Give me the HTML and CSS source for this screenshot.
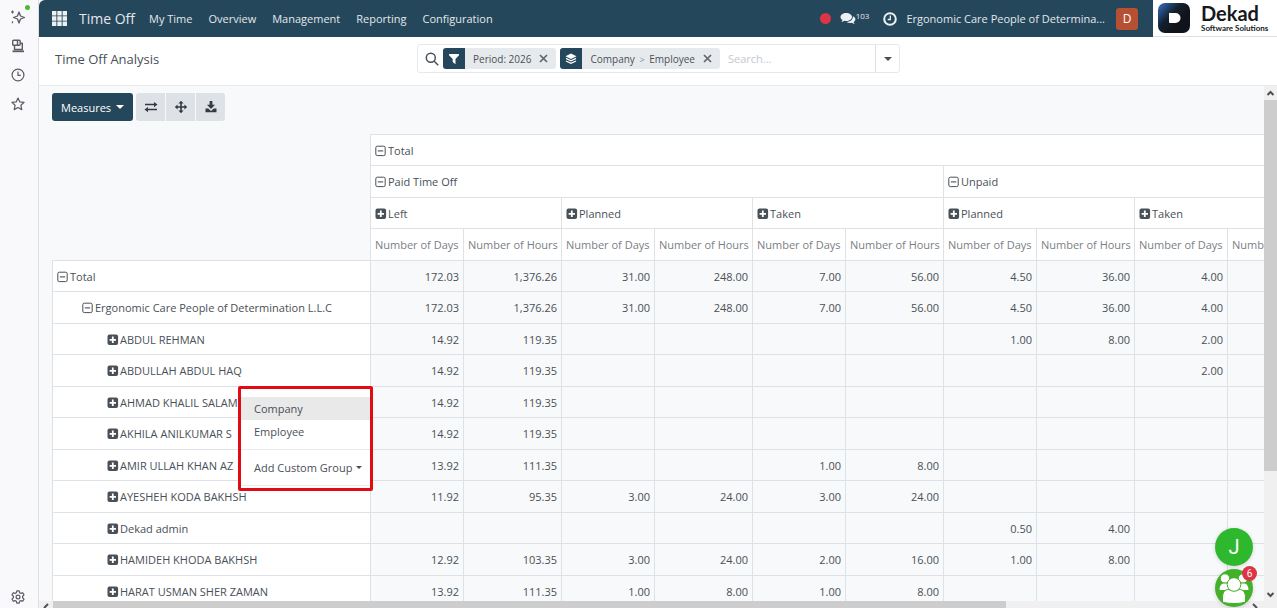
FILE: index.html
```html
<!DOCTYPE html>
<html lang="en">
  <head>
    <meta charset="UTF-8" />
    <meta name="viewport" content="width=device-width, initial-scale=1.0" />
    <title>Time Off Analysis</title>
    <link rel="stylesheet" href="styles.css">
  </head>

  <body>
    <svg class="defs" width="0" height="0">
      <symbol id="plus" viewBox="0 0 12 12">
        <rect x="0.5" y="0.5" width="10.600" height="10.600" rx="2" fill="currentColor" />
        <path d="M5.800 2.600v6.400M2.600 5.800h6.400" stroke="#fff" stroke-width="1.800" />
      </symbol>
      <symbol id="minus" viewBox="0 0 12 12">
        <rect x="0.800" y="1.200" width="9.400" height="9.400" rx="1.500" fill="none" stroke="currentColor" />
        <path d="M2.800 5.900h5.400" stroke="currentColor" stroke-width="1.100" />
      </symbol>
    </svg>

    <aside class="sidebar">
      <button class="side-btn" aria-label="Assistant">
        <svg width="16" height="16" viewBox="0 0 16 16" fill="none" stroke="#5b5b66" stroke-width="1.3" stroke-linejoin="round">
          <path d="M9 3l1.500 4L14.500 8.500l-4 1.500L9 14l-1.500-4L3.500 8.500l4-1.500z" />
          <path d="M2.500 1.500v3M1 3h3M2.500 12.300v2" stroke-width="1.200" />
        </svg>
        <span class="green-dot"></span>
      </button>
      <button class="side-btn" aria-label="Synced tabs">
        <svg width="16" height="16" viewBox="0 0 16 16" fill="none" stroke="#5b5b66" stroke-width="1.4" stroke-linejoin="round">
          <rect x="2.700" y="2.200" width="7.500" height="5" rx="1" />
          <path d="M7.500 2.200v5M4.500 7.500v4h7.800V5.300h-1.600" />
          <path d="M2.500 13.300h11.500" stroke-width="1.800" />
        </svg>
      </button>
      <button class="side-btn" aria-label="History">
        <svg width="16" height="16" viewBox="0 0 16 16" fill="none" stroke="#5b5b66" stroke-width="1.2">
          <circle cx="8" cy="8" r="5.900" />
          <path d="M8 4.500V8.300h2.800" />
        </svg>
      </button>
      <button class="side-btn" aria-label="Bookmarks">
        <svg width="16" height="16" viewBox="0 0 16 16" fill="none" stroke="#5b5b66" stroke-width="1.2" stroke-linejoin="round">
          <path d="M8 2l1.800 3.900 4.300.5-3.200 2.900.9 4.300L8 11.500l-3.800 2.100.9-4.300L1.900 6.400l4.300-.5z" />
        </svg>
      </button>
      <button class="side-btn settings" aria-label="Settings">
        <svg width="16" height="16" viewBox="0 0 16 16" fill="none" stroke="#5b5b66" stroke-width="1.2" stroke-linejoin="round">
          <path d="M6.800 1.800h2.400l.4 1.900 1.300.7 1.800-.7 1.300 2.200-1.400 1.300v1.600l1.400 1.300-1.300 2.200-1.800-.7-1.300.7-.4 1.900H6.800l-.4-1.900-1.300-.7-1.800.7L2 10.100l1.400-1.300V7.200L2 5.900l1.300-2.200 1.800.7 1.300-.7z" />
          <circle cx="8" cy="8" r="1.900" />
        </svg>
      </button>
    </aside>

    <main>
      <header class="navbar">
        <button class="apps" aria-label="Apps">
          <svg width="15" height="15" viewBox="0 0 15 15" fill="#eef1f3">
            <path d="M0 0h4.400v4.400H0zM5.300 0h4.400v4.400H5.300zM10.600 0H15v4.400h-4.400zM0 5.300h4.400v4.400H0zM5.300 5.300h4.400v4.400H5.300zM10.600 5.300H15v4.400h-4.400zM0 10.600h4.400V15H0zM5.300 10.600h4.400V15H5.300zM10.600 10.600H15V15h-4.400z" />
          </svg>
        </button>
        <a href="#" class="brand">Time Off</a>
        <nav>
          <a href="#">My Time</a>
          <a href="#">Overview</a>
          <a href="#">Management</a>
          <a href="#">Reporting</a>
          <a href="#">Configuration</a>
        </nav>
        <div class="tray">
          <span class="red-dot"></span>
          <button class="messages" aria-label="Messages">
            <svg width="16" height="14" viewBox="0 0 16 14" fill="#eef1f3">
              <path d="M6.200 1C2.900 1 .5 2.700.5 5c0 1.300.8 2.400 2 3.100-.2.700-.6 1.200-1.100 1.800 1.300-.1 2.300-.6 3-1.100.6.1 1.200.2 1.800.2 3.300 0 5.800-1.700 5.800-4S9.500 1 6.200 1z" />
              <path d="M12.900 4.300c1.500.7 2.500 1.700 2.500 3 0 1.200-.7 2.100-1.800 2.800.2.700.6 1.300 1.200 1.900-1.300-.1-2.300-.6-3-1.200-1.900.4-4 .1-5.300-.8 3.500-.1 6.700-2.200 6.400-5.700z" />
            </svg>
            <sup>103</sup>
          </button>
          <button class="activity" aria-label="Activities">
            <svg width="14" height="14" viewBox="0 0 14 14" fill="none" stroke="#eef1f3">
              <circle cx="7" cy="7" r="5.800" stroke-width="2" />
              <path d="M7.300 3.500v4H4.700" stroke-width="1.300" />
            </svg>
          </button>
          <span class="company">Ergonomic Care People of Determina...</span>
          <button class="avatar">D</button>
        </div>
        <div class="logo">
          <svg width="32" height="30" viewBox="0 0 32 30">
            <defs>
              <linearGradient id="lg" x1="0" y1="0" x2="0.700" y2="0.600">
                <stop offset="0" stop-color="#3475c9" />
                <stop offset="0.600" stop-color="#14202f" />
                <stop offset="1" stop-color="#10141a" />
              </linearGradient>
            </defs>
            <rect width="32" height="30" rx="7" fill="url(#lg)" />
            <path d="M11 10h6.500a5 5 0 0 1 0 10H12a1 1 0 0 1-1-1z" fill="#fff" />
          </svg>
          <div class="logo-text">
            <strong>Dekad</strong>
            <span>Software Solutions</span>
          </div>
        </div>
      </header>

      <section class="control">
        <h1>Time Off Analysis</h1>
        <div class="search">
          <svg width="14" height="14" viewBox="0 0 14 14" fill="none" stroke="#495057" stroke-width="1.500">
            <circle cx="5.800" cy="5.800" r="4.500" />
            <path d="M9.200 9.200l4 4" />
          </svg>
          <div class="facet">
            <span class="facet-icon">
              <svg width="12" height="12" viewBox="0 0 12 12" fill="#fff">
                <path d="M1 1h10v1.300L7.500 6v5.200L4.700 9V6L1 2.300z" />
              </svg>
            </span>
            <span>Period: 2026</span>
            <button aria-label="Remove period">
              <svg width="9" height="9" viewBox="0 0 9 9" stroke="#5f666d" stroke-width="1.700"><path d="M1 1l7 7M8 1L1 8" /></svg>
            </button>
          </div>
          <div class="facet">
            <span class="facet-icon">
              <svg width="12" height="12" viewBox="0 0 12 12" fill="#fff">
                <path d="M6 0.500l5.500 2.700L6 5.900.5 3.200z" />
                <path d="M1 5.400l5 2.400 5-2.400M1 8l5 2.400L11 8" fill="none" stroke="#fff" stroke-width="1.200" />
              </svg>
            </span>
            <span>Company <small>&gt;</small> Employee</span>
            <button aria-label="Remove grouping">
              <svg width="9" height="9" viewBox="0 0 9 9" stroke="#5f666d" stroke-width="1.700"><path d="M1 1l7 7M8 1L1 8" /></svg>
            </button>
          </div>
          <input type="text" placeholder="Search..." aria-label="Search" />
          <button class="toggle" aria-label="Search options"><span class="caret"></span></button>
        </div>
      </section>

      <section class="content">
        <div class="view">
          <div class="buttons">
            <button class="measures">Measures <span class="caret"></span></button>
            <div class="btn-group">
              <button aria-label="Flip axis">
                <svg width="14" height="12" viewBox="0 0 14 12" fill="#343a40">
                  <path d="M1 2.800h9V1l3.500 2.600L10 6.200V4.200H1zM13 7.800H4V6L.5 8.600 4 11.200V9.200h9z" />
                </svg>
              </button>
              <button aria-label="Expand all">
                <svg width="14" height="14" viewBox="0 0 14 14" fill="#343a40">
                  <path d="M7 .8l2.600 2.800H7.800v2.600h2.600V4.400L13.200 7l-2.800 2.600V7.800H7.800v2.600h1.800L7 13.200l-2.600-2.800h1.800V7.800H3.600v1.800L.8 7l2.800-2.600v1.800h2.600V3.600H4.400z" />
                </svg>
              </button>
              <button aria-label="Download">
                <svg width="14" height="14" viewBox="0 0 14 14" fill="#343a40">
                  <path d="M5.600 1h2.800v3.800h2.600L7 8.900 3 4.800h2.600z" />
                  <path d="M1.500 8.500h2.700L7 11l2.800-2.500h2.700v3.700h-11z" />
                </svg>
              </button>
            </div>
          </div>

          <table>
            <colgroup>
              <col class="name">
              <col class="days"><col class="hours">
              <col class="days"><col class="hours">
              <col class="days"><col class="hours">
              <col class="days"><col class="hours">
              <col class="days"><col class="hours">
            </colgroup>
            <thead>
              <tr>
                <td class="corner" rowspan="4"></td>
                <th colspan="10"><svg class="ico"><use href="#minus" /></svg>Total</th>
              </tr>
              <tr>
                <th colspan="6"><svg class="ico"><use href="#minus" /></svg>Paid Time Off</th>
                <th colspan="4"><svg class="ico"><use href="#minus" /></svg>Unpaid</th>
              </tr>
              <tr>
                <th colspan="2"><svg class="ico"><use href="#plus" /></svg>Left</th>
                <th colspan="2"><svg class="ico"><use href="#plus" /></svg>Planned</th>
                <th colspan="2"><svg class="ico"><use href="#plus" /></svg>Taken</th>
                <th colspan="2"><svg class="ico"><use href="#plus" /></svg>Planned</th>
                <th colspan="2"><svg class="ico"><use href="#plus" /></svg>Taken</th>
              </tr>
              <tr class="measure-row">
                <th>Number of Days</th>
                <th>Number of Hours</th>
                <th>Number of Days</th>
                <th>Number of Hours</th>
                <th>Number of Days</th>
                <th>Number of Hours</th>
                <th>Number of Days</th>
                <th>Number of Hours</th>
                <th>Number of Days</th>
                <th>Number of Hours</th>
              </tr>
            </thead>
            <tbody id="rows"></tbody>
          </table>
        </div>
        <div class="vbar">
          <svg width="9" height="14" viewBox="0 0 9 14" fill="none" stroke="#505050" stroke-width="2"><path d="M1.500 9l3-3 3 3" /></svg>
          <div class="vthumb"></div>
          <svg width="9" height="14" viewBox="0 0 9 14" fill="none" stroke="#505050" stroke-width="2"><path d="M1.500 6l3 3 3-3" /></svg>
        </div>
      </section>
      <div class="hbar">
        <svg width="14" height="7" viewBox="0 0 14 7" fill="none" stroke="#505050" stroke-width="2"><path d="M9 3L5 7" /></svg>
        <div class="hthumb"></div>
        <svg class="right" width="14" height="7" viewBox="0 0 14 7" fill="none" stroke="#505050" stroke-width="2"><path d="M3 3l4 4" /></svg>
      </div>
    </main>

    <div class="menu">
      <button class="active">Company</button>
      <button>Employee</button>
      <hr />
      <button>Add Custom Group <span class="caret"></span></button>
      <hr />
    </div>

    <div class="chats">
      <button class="chat">J</button>
      <button class="chat people" aria-label="Group chat">
        <svg width="38" height="38" viewBox="0 0 38 38" fill="#fff" stroke="#43b02a" stroke-width="1">
          <circle cx="10" cy="9.500" r="4.700" />
          <circle cx="28" cy="9.500" r="4.700" />
          <path d="M4 21.500c0-5 2-7.500 6-7.500s6 2 6 7.500zM34 21.500c0-5-2-7.500-6-7.500s-6 2-6 7.500z" />
          <path d="M7.500 33v-4c0-5.500 2-8.500 6-8.500 3 1.500 8 1.500 11 0 4 0 6 3 6 8.500v4c-6 2-17 2-23 0z" />
          <circle cx="19" cy="15.500" r="6.800" />
        </svg>
        <span class="badge">6</span>
      </button>
    </div>

    <script>
      const rows = [
        ["Total", 0, "172.03", "1,376.26", "31.00", "248.00", "7.00", "56.00", "4.50", "36.00", "4.00", ""],
        ["Ergonomic Care People of Determination L.L.C", 1, "172.03", "1,376.26", "31.00", "248.00", "7.00", "56.00", "4.50", "36.00", "4.00", ""],
        ["ABDUL REHMAN", 2, "14.92", "119.35", "", "", "", "", "1.00", "8.00", "2.00", ""],
        ["ABDULLAH ABDUL HAQ", 2, "14.92", "119.35", "", "", "", "", "", "", "2.00", ""],
        ["AHMAD KHALIL SALAM", 2, "14.92", "119.35", "", "", "", "", "", "", "", ""],
        ["AKHILA ANILKUMAR S", 2, "14.92", "119.35", "", "", "", "", "", "", "", ""],
        ["AMIR ULLAH KHAN AZ", 2, "13.92", "111.35", "", "", "1.00", "8.00", "", "", "", ""],
        ["AYESHEH KODA BAKHSH", 2, "11.92", "95.35", "3.00", "24.00", "3.00", "24.00", "", "", "", ""],
        ["Dekad admin", 2, "", "", "", "", "", "", "0.50", "4.00", "", ""],
        ["HAMIDEH KHODA BAKHSH", 2, "12.92", "103.35", "3.00", "24.00", "2.00", "16.00", "1.00", "8.00", "", ""],
        ["HARAT USMAN SHER ZAMAN", 2, "13.92", "111.35", "1.00", "8.00", "1.00", "8.00", "", "", "", ""],
      ];
      //fill the pivot body....
      document.getElementById("rows").innerHTML = rows
        .map(([name, level, ...values]) => {
          const icon = level < 2 ? "minus" : "plus";
          const cells = values.map((v) => `<td>${v}</td>`).join("");
          return `<tr><th class="level${level}"><svg class="ico"><use href="#${icon}" /></svg>${name}</th>${cells}</tr>`;
        })
        .join("");
    </script>
  </body>
</html>
```

FILE: styles.css
```css
* {
  margin: 0;
  padding: 0;
  box-sizing: border-box;
}

body {
  display: flex;
  height: 100vh;
  overflow: hidden;
  background-color: #f9f9fb;
  color: #495057;
  font-family: "Open Sans", "Noto Sans", sans-serif;
  font-size: 11px;
}

button,
input {
  font: inherit;
  color: inherit;
  border: none;
  outline: none;
  background: none;
}

button {
  cursor: pointer;
}

a {
  color: inherit;
  text-decoration: none;
}

svg {
  display: block;
  flex: none;
}

.defs {
  position: absolute;
}

.caret {
  display: inline-block;
  border: 4px solid transparent;
  border-top-color: currentColor;
  border-bottom: none;
}

/* sidebar */
.sidebar {
  flex: none;
  width: 39px;
  display: flex;
  flex-direction: column;
  align-items: center;
  gap: 13px;
  padding: 9px 3px 3px 0;
  border-right: 1px solid #dfe0e4;
}

.side-btn {
  position: relative;
  height: 16px;
}

.settings {
  margin-top: auto;
}

.green-dot {
  position: absolute;
  top: -4px;
  right: -4px;
  width: 5px;
  height: 5px;
  border-radius: 50%;
  background-color: #4cbb34;
}

main {
  flex: 1;
  min-width: 0;
  display: flex;
  flex-direction: column;
  background-color: #f8f9fa;
}

/* navbar */
.navbar {
  flex: none;
  height: 37px;
  display: flex;
  align-items: center;
  padding-left: 13px;
  border-top-left-radius: 6px;
  background-color: #25475b;
  color: #e3e8eb;
}

.brand {
  margin: 0 14px 0 12px;
  font-size: 14px;
}

nav {
  display: flex;
  gap: 16px;
}

.tray {
  margin-left: auto;
  display: flex;
  align-items: center;
}

.red-dot {
  width: 11px;
  height: 11px;
  border-radius: 50%;
  background-color: #dc3545;
}

.messages {
  display: flex;
  align-items: center;
  margin: 0 14px 0 9px;
}

.messages sup {
  margin-top: -7px;
  font-size: 8px;
}

.company {
  margin: 0 11px 0 9px;
}

.avatar {
  width: 22px;
  height: 22px;
  margin-right: 15px;
  border-radius: 3px;
  background-color: #b74f33;
  color: #fff;
  font-size: 12px;
}

.logo {
  height: 37px;
  display: flex;
  align-items: center;
  gap: 11px;
  padding: 0 5px;
  border-bottom: 1px solid #dee2e6;
  background-color: #fff;
  color: #15181c;
}

.logo-text {
  display: flex;
  flex-direction: column;
  width: 71px;
  font-family: Lato, sans-serif;
}

.logo-text strong {
  font-size: 20px;
  line-height: 20px;
}

.logo-text span {
  font-size: 8px;
  font-weight: 700;
  line-height: 10px;
  white-space: nowrap;
}

/* control panel */
.control {
  flex: none;
  height: 49px;
  display: flex;
  align-items: flex-start;
  padding: 7px 16px;
  border-bottom: 1px solid #e9ecef;
  background-color: #fff;
}

.control h1 {
  width: 362px;
  font-size: 13px;
  font-weight: 400;
  line-height: 30px;
}

.search {
  width: 483px;
  height: 29px;
  display: flex;
  align-items: center;
  gap: 4px;
  padding-left: 7px;
  border: 1px solid #e6e8eb;
  border-radius: 3px;
}

.facet {
  flex: none;
  height: 21px;
  display: flex;
  align-items: center;
  gap: 8px;
  padding-right: 8px;
  border-radius: 3px;
  overflow: hidden;
  background-color: #e7eaed;
  font-size: 10px;
}

.facet small {
  margin: 0 2px;
  font-size: 9px;
  color: #868e96;
}

.facet-icon {
  width: 22px;
  height: 21px;
  display: flex;
  align-items: center;
  justify-content: center;
  background-color: #25475b;
}

.search input {
  flex: 1;
  min-width: 0;
  padding-left: 4px;
}

.search input::placeholder {
  color: #c3c8cd;
}

.toggle {
  width: 24px;
  height: 27px;
  display: flex;
  align-items: center;
  justify-content: center;
  border-left: 1px solid #dee2e6;
}

/* pivot view */
.content {
  flex: 1;
  min-height: 0;
  display: flex;
}

.view {
  flex: 1;
  min-width: 0;
  padding: 7px 0 0 13px;
  overflow: hidden;
}

.buttons {
  display: flex;
  gap: 3px;
  margin-bottom: 13px;
}

.measures {
  height: 28px;
  padding: 0 9px;
  display: flex;
  align-items: center;
  gap: 5px;
  border-radius: 3px;
  background-color: #25475b;
  color: #fff;
}

.btn-group {
  display: flex;
  gap: 1px;
  border-radius: 3px;
  overflow: hidden;
}

.btn-group button {
  width: 29px;
  height: 28px;
  display: flex;
  align-items: center;
  justify-content: center;
  background-color: #dee2e6;
}

table {
  width: 1273px;
  table-layout: fixed;
  border-collapse: collapse;
}

tr {
  height: 31px;
}

tr:nth-child(even) {
  height: 32px;
}

.name {
  width: 318px;
}

.days {
  width: 93px;
}

.hours {
  width: 98px;
}

th,
td {
  padding: 0 4px;
  border: 1px solid #dee2e6;
  font-weight: 400;
  white-space: nowrap;
}

th {
  background-color: #fff;
  text-align: left;
}

td {
  text-align: right;
}

.corner {
  border-top: none;
  border-left: none;
}

.measure-row th {
  color: #7a8087;
}

.ico {
  display: inline-block;
  width: 12px;
  height: 12px;
  margin-right: 1px;
  vertical-align: -2px;
}

.level1 {
  padding-left: 29px;
}

.level2 {
  padding-left: 54px;
}

/* scrollbars */
.vbar {
  flex: none;
  width: 13px;
  display: flex;
  flex-direction: column;
  align-items: center;
  background-color: #f0f0f0;
}

.vthumb {
  width: 100%;
  height: 72%;
  margin-bottom: auto;
  background-color: #cdcdcd;
}

.hbar {
  flex: none;
  height: 7px;
  display: flex;
  background-color: #f0f0f0;
}

.hthumb {
  width: 77%;
  background-color: #cdcdcd;
}

.right {
  margin-left: auto;
  margin-right: 13px;
}

/* group by menu */
.menu {
  position: absolute;
  left: 238px;
  top: 386px;
  width: 135px;
  padding-top: 8px;
  padding-bottom: 2px;
  border: 3px solid #e30b13;
  border-radius: 2px;
  background-color: #fff;
}

.menu button {
  width: 100%;
  height: 23px;
  padding-left: 13px;
  display: flex;
  align-items: center;
  gap: 4px;
  white-space: nowrap;
}

.menu .active {
  background-color: #e9e9e9;
}

.menu hr {
  margin: 6px 0;
  border: none;
  border-top: 1px solid #e9ecef;
}

.menu hr:last-child {
  margin-bottom: 0;
}

.menu .caret {
  border-width: 3px;
  border-bottom: none;
}

/* chat heads */
.chats {
  position: absolute;
  right: 24px;
  bottom: 1px;
  display: flex;
  flex-direction: column;
  gap: 3px;
}

.chat {
  position: relative;
  width: 38px;
  height: 38px;
  border-radius: 50%;
  background-color: #2eb82e;
  color: #fff;
  font-family: Roboto, sans-serif;
  font-size: 20px;
  box-shadow: 0 1px 4px rgba(0, 0, 0, 0.15);
}

.people {
  background-color: #43b02a;
}

.badge {
  position: absolute;
  top: -3px;
  right: -4px;
  width: 15px;
  height: 15px;
  border-radius: 50%;
  background-color: #dc3545;
  font-size: 10px;
  line-height: 15px;
}
```
